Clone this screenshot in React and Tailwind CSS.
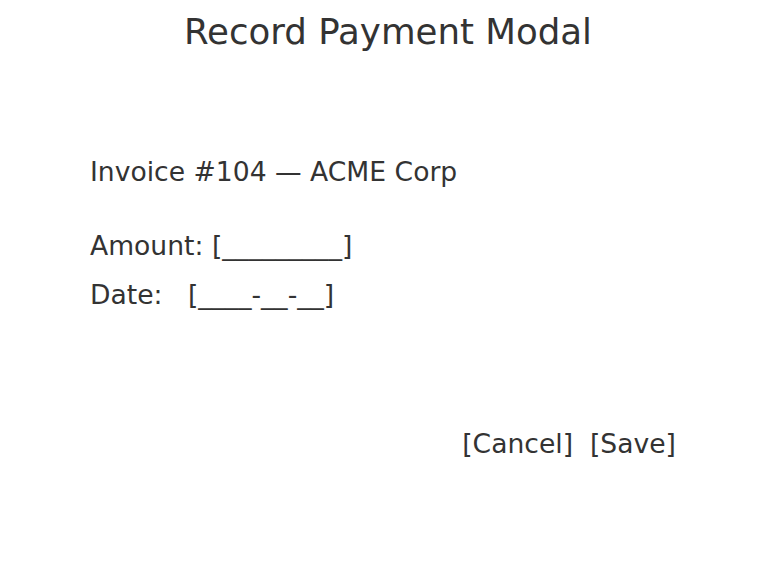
import React from 'react';

const App = () => {
    return (
        <div className="w-[776px] h-[565px] bg-white text-[#333333] font-['DejaVu_Sans',sans-serif]">
            <h1 className="pt-[12px] text-center text-[35.6px] leading-[40px]">Record Payment Modal</h1>

            <div className="pl-[90px] pt-[104px] text-[26.6px] leading-[32px]">
                <p>Invoice #104 — ACME Corp</p>
                <p className="mt-[42px]">Amount: [_________]</p>
                <p className="mt-[17px] whitespace-pre">Date:   [____-__-__]</p>
            </div>

            {/* footer actions */}
            <div className="flex justify-end pr-[100px] pt-[117px] text-[26.6px] leading-[32px] whitespace-pre">
                <span>[Cancel]  [Save]</span>
            </div>
        </div>
    );
};

export default App;
